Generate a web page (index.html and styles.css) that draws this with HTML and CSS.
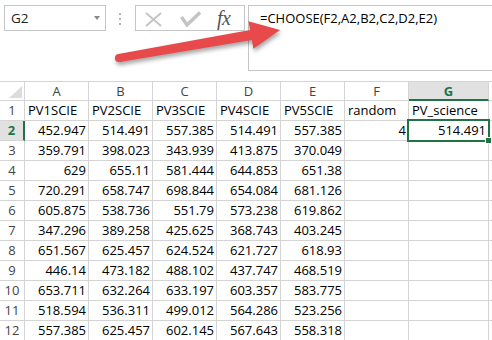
FILE: index.html
```html
<!DOCTYPE html>
<html>
<head>
<meta charset="utf-8">
<link rel="stylesheet" href="styles.css">
</head>
<body>
<div class="app">
  <div class="toolbar">
    <div class="namebox"><span class="ref">G2</span><span class="caret"></span></div>
    <div class="grip"><i></i><i></i><i></i></div>
    <div class="fbuttons">
      <svg class="icon-x" width="17" height="15" viewBox="0 0 17 15"><path d="M1 1 L16 14 M16 1 L1 14" stroke="#c4c4c4" stroke-width="2" fill="none"/></svg>
      <svg class="icon-check" width="21" height="16" viewBox="0 0 21 16"><path d="M1.5 6 L7 14 L20 1.5" stroke="#c4c4c4" stroke-width="3.4" fill="none" stroke-linejoin="miter"/></svg>
      <span class="fx">fx</span>
    </div>
    <div class="formula">=CHOOSE(F2,A2,B2,C2,D2,E2)</div>
  </div>

  <div class="sheet">
    <div class="hd corner"><div class="tri"></div></div>
    <div class="hd">A</div><div class="hd">B</div><div class="hd">C</div><div class="hd">D</div><div class="hd">E</div><div class="hd">F</div><div class="hd hd-sel">G</div><div class="hd"></div>

    <div class="rh">1</div><div class="c">PV1SCIE</div><div class="c">PV2SCIE</div><div class="c">PV3SCIE</div><div class="c">PV4SCIE</div><div class="c">PV5SCIE</div><div class="c">random</div><div class="c">PV_science</div><div class="c"></div>

    <div class="rh rh-sel">2</div><div class="c n">452.947</div><div class="c n">514.491</div><div class="c n">557.385</div><div class="c n">514.491</div><div class="c n">557.385</div><div class="c n">4</div><div class="c n sel">514.491</div><div class="c"></div>

    <div class="rh">3</div><div class="c n">359.791</div><div class="c n">398.023</div><div class="c n">343.939</div><div class="c n">413.875</div><div class="c n">370.049</div><div class="c"></div><div class="c"></div><div class="c"></div>

    <div class="rh">4</div><div class="c n">629</div><div class="c n">655.11</div><div class="c n">581.444</div><div class="c n">644.853</div><div class="c n">651.38</div><div class="c"></div><div class="c"></div><div class="c"></div>

    <div class="rh">5</div><div class="c n">720.291</div><div class="c n">658.747</div><div class="c n">698.844</div><div class="c n">654.084</div><div class="c n">681.126</div><div class="c"></div><div class="c"></div><div class="c"></div>

    <div class="rh">6</div><div class="c n">605.875</div><div class="c n">538.736</div><div class="c n">551.79</div><div class="c n">573.238</div><div class="c n">619.862</div><div class="c"></div><div class="c"></div><div class="c"></div>

    <div class="rh">7</div><div class="c n">347.296</div><div class="c n">389.258</div><div class="c n">425.625</div><div class="c n">368.743</div><div class="c n">403.245</div><div class="c"></div><div class="c"></div><div class="c"></div>

    <div class="rh">8</div><div class="c n">651.567</div><div class="c n">625.457</div><div class="c n">624.524</div><div class="c n">621.727</div><div class="c n">618.93</div><div class="c"></div><div class="c"></div><div class="c"></div>

    <div class="rh">9</div><div class="c n">446.14</div><div class="c n">473.182</div><div class="c n">488.102</div><div class="c n">437.747</div><div class="c n">468.519</div><div class="c"></div><div class="c"></div><div class="c"></div>

    <div class="rh">10</div><div class="c n">653.711</div><div class="c n">632.264</div><div class="c n">633.197</div><div class="c n">603.357</div><div class="c n">583.775</div><div class="c"></div><div class="c"></div><div class="c"></div>

    <div class="rh">11</div><div class="c n">518.594</div><div class="c n">536.311</div><div class="c n">499.012</div><div class="c n">564.286</div><div class="c n">523.256</div><div class="c"></div><div class="c"></div><div class="c"></div>

    <div class="rh">12</div><div class="c n">557.385</div><div class="c n">625.457</div><div class="c n">602.145</div><div class="c n">567.643</div><div class="c n">558.318</div><div class="c"></div><div class="c"></div><div class="c"></div>
  </div>

  <svg class="arrow" width="492" height="340" viewBox="0 0 492 340">
    <g class="arrow-shape">
      <circle cx="119" cy="58" r="4.1"/>
      <polygon points="118.3,54.1 250.1,30.1 248.4,21.2 280,30 253.4,48.8 251.9,39.9 119.7,61.9"/>
    </g>
  </svg>
</div>
</body>
</html>
```

FILE: styles.css
```css
html, body {
  margin: 0;
  padding: 0;
  background: #ffffff;
}

.app {
  position: relative;
  width: 492px;
  height: 340px;
  overflow: hidden;
  font-family: "Open Sans", "Liberation Sans", sans-serif;
  color: #000;
}

/* ---------- top toolbar ---------- */
.toolbar {
  display: flex;
  align-items: flex-start;
  height: 81px;
  box-sizing: border-box;
  padding: 5px 0 0 4px;
}

.namebox {
  width: 102px;
  height: 26px;
  box-sizing: border-box;
  border: 1px solid #c6c6c6;
  display: flex;
  align-items: center;
  justify-content: space-between;
  padding: 0 5px 0 6px;
  font-size: 13.5px;
  color: #222;
}

.caret {
  width: 0;
  height: 0;
  border-left: 3.5px solid transparent;
  border-right: 3.5px solid transparent;
  border-top: 4px solid #8a8a8a;
  margin-top: -1px;
}

.grip {
  display: flex;
  flex-direction: column;
  gap: 3px;
  margin: 8px 14px 0 13px;
}
.grip i {
  display: block;
  width: 2px;
  height: 2px;
  background: #b4b4b4;
}

.fbuttons {
  width: 110px;
  height: 26px;
  box-sizing: border-box;
  border: 1px solid #c6c6c6;
  display: flex;
  align-items: center;
  padding-left: 9px;
}
.icon-x {
  display: block;
  margin-top: 2px;
}
.icon-check {
  display: block;
  margin-left: 18px;
  margin-top: 1px;
}
.fx {
  margin-left: 16px;
  font-family: "Liberation Serif", "DejaVu Serif", serif;
  font-style: italic;
  font-size: 20px;
  line-height: 20px;
  color: #555;
  letter-spacing: -0.5px;
}

.formula {
  flex: 1;
  margin-left: 3px;
  height: 66px;
  box-sizing: border-box;
  border: 1px solid #c6c6c6;
  border-right: none;
  padding: 3px 0 0 11px;
  font-size: 13px;
  line-height: 18px;
  color: #000;
  white-space: nowrap;
}

/* ---------- sheet ---------- */
.sheet {
  display: grid;
  grid-template-columns: 25px repeat(6, 64px) 80px 1fr;
  grid-template-rows: 19px;
  grid-auto-rows: 20px;
  border-top: 1px solid #d4d4d4;
  font-size: 13px;
}

.sheet > div {
  box-sizing: border-box;
  border-right: 1px solid #d4d4d4;
  border-bottom: 1px solid #d4d4d4;
  white-space: nowrap;
  overflow: hidden;
}

.hd {
  text-align: center;
  line-height: 18px;
  color: #444;
}

.hd-sel {
  background: #e1e1e1;
  color: #217346;
  font-weight: 700;
  border-bottom: 2px solid #217346 !important;
}

.corner {
  display: flex;
  justify-content: flex-end;
  align-items: flex-end;
  padding: 0 2px 2px 0;
}
.tri {
  width: 13px;
  height: 12px;
  background: #dcdcdc;
  clip-path: polygon(100% 0, 100% 100%, 0 100%);
}

.rh {
  text-align: center;
  line-height: 19px;
  color: #444;
}

.rh-sel {
  background: #e1e1e1;
  color: #217346;
  font-weight: 700;
  border-right: 2px solid #217346 !important;
}

.c {
  line-height: 19px;
  padding: 0 2px 0 3px;
}

.n {
  text-align: right;
}

.sheet > .sel {
  position: relative;
  overflow: visible;
}
.sel::before {
  content: "";
  position: absolute;
  left: -2px;
  top: -2px;
  right: -2px;
  bottom: -2px;
  border: 2px solid #217346;
}
.sel::after {
  content: "";
  position: absolute;
  right: -4px;
  bottom: -4px;
  width: 5px;
  height: 5px;
  background: #217346;
  border: 1px solid #ffffff;
}

/* ---------- annotation arrow ---------- */
.arrow {
  position: absolute;
  left: 0;
  top: 0;
  pointer-events: none;
}
.arrow-shape {
  fill: #e8494b;
  filter: drop-shadow(1px 3px 2px rgba(0, 0, 0, 0.35));
}
```
